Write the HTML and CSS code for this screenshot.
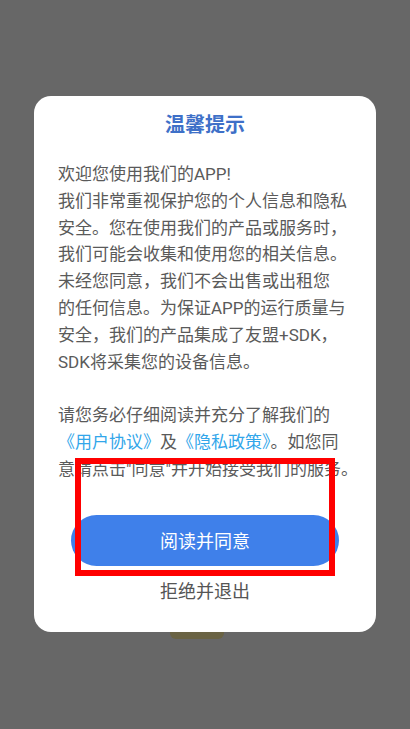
FILE: index.html
```html
<!DOCTYPE html>
<html lang="zh-CN">
<head>
<meta charset="utf-8">
<title>温馨提示</title>
<link rel="stylesheet" href="styles.css">
</head>
<body>
<div class="screen">
  <div class="peek"></div>
  <div class="dialog">
    <h1 class="title">温馨提示</h1>
    <div class="body">
      <p>欢迎您使用我们的APP!<br>我们非常重视保护您的个人信息和隐私<br>安全。您在使用我们的产品或服务时，<br>我们可能会收集和使用您的相关信息。<br>未经您同意，我们不会出售或出租您<br>的任何信息。为保证APP的运行质量与<br>安全，我们的产品集成了友盟+SDK，<br>SDK将采集您的设备信息。</p>
      <p class="gap">请您务必仔细阅读并充分了解我们的<br><span class="link">《用户协议》</span>及<span class="link">《隐私政策》</span>。如您同<br>意请点击"同意"并开始接受我们的服务。</p>
    </div>
    <button class="agree">阅读并同意</button>
    <div class="refuse">拒绝并退出</div>
  </div>
  <div class="highlight"></div>
</div>
</body>
</html>
```
FILE: styles.css
```css
* { box-sizing: border-box; }
html, body { margin: 0; padding: 0; }
body {
  width: 410px;
  height: 729px;
  background: #676767;
  font-family: Roboto, "Noto Sans CJK SC", sans-serif;
  overflow: hidden;
}
.screen {
  position: relative;
  width: 410px;
  height: 729px;
  padding: 96px 34px 0 34px;
}
.peek {
  position: absolute;
  left: 170px;
  top: 626px;
  width: 54px;
  height: 13px;
  background: #6a6344;
  border-radius: 0 0 6px 6px;
}
.dialog {
  position: relative;
  width: 342px;
  height: 536px;
  background: #ffffff;
  border-radius: 17px;
  padding: 14px 10px 0 24px;
  display: flex;
  flex-direction: column;
  align-items: stretch;
}
.title {
  margin: 0 14px 0 0;
  font-size: 20px;
  line-height: 30px;
  font-weight: 700;
  color: #3e70c8;
  text-align: center;
}
.body {
  margin-top: 21px;
  font-size: 17px;
  line-height: 26.8px;
  color: #5a5a5a;
  white-space: nowrap;
}
.body p { margin: 0; }
.body p.gap { margin-top: 26.8px; }
.link { color: #31a6ea; }
.agree {
  margin: 32px 27px 0 13px;
  height: 51px;
  border: none;
  border-radius: 26px;
  background: #3f80ea;
  color: #ffffff;
  font-family: Roboto, "Noto Sans CJK SC", sans-serif;
  font-size: 18px;
}
.refuse {
  margin: 13px 14px 0 0;
  font-size: 18px;
  line-height: 26px;
  color: #555555;
  text-align: center;
}
.highlight {
  position: absolute;
  left: 75px;
  top: 458px;
  width: 260px;
  height: 118px;
  border: 6px solid #ff0000;
}
```
